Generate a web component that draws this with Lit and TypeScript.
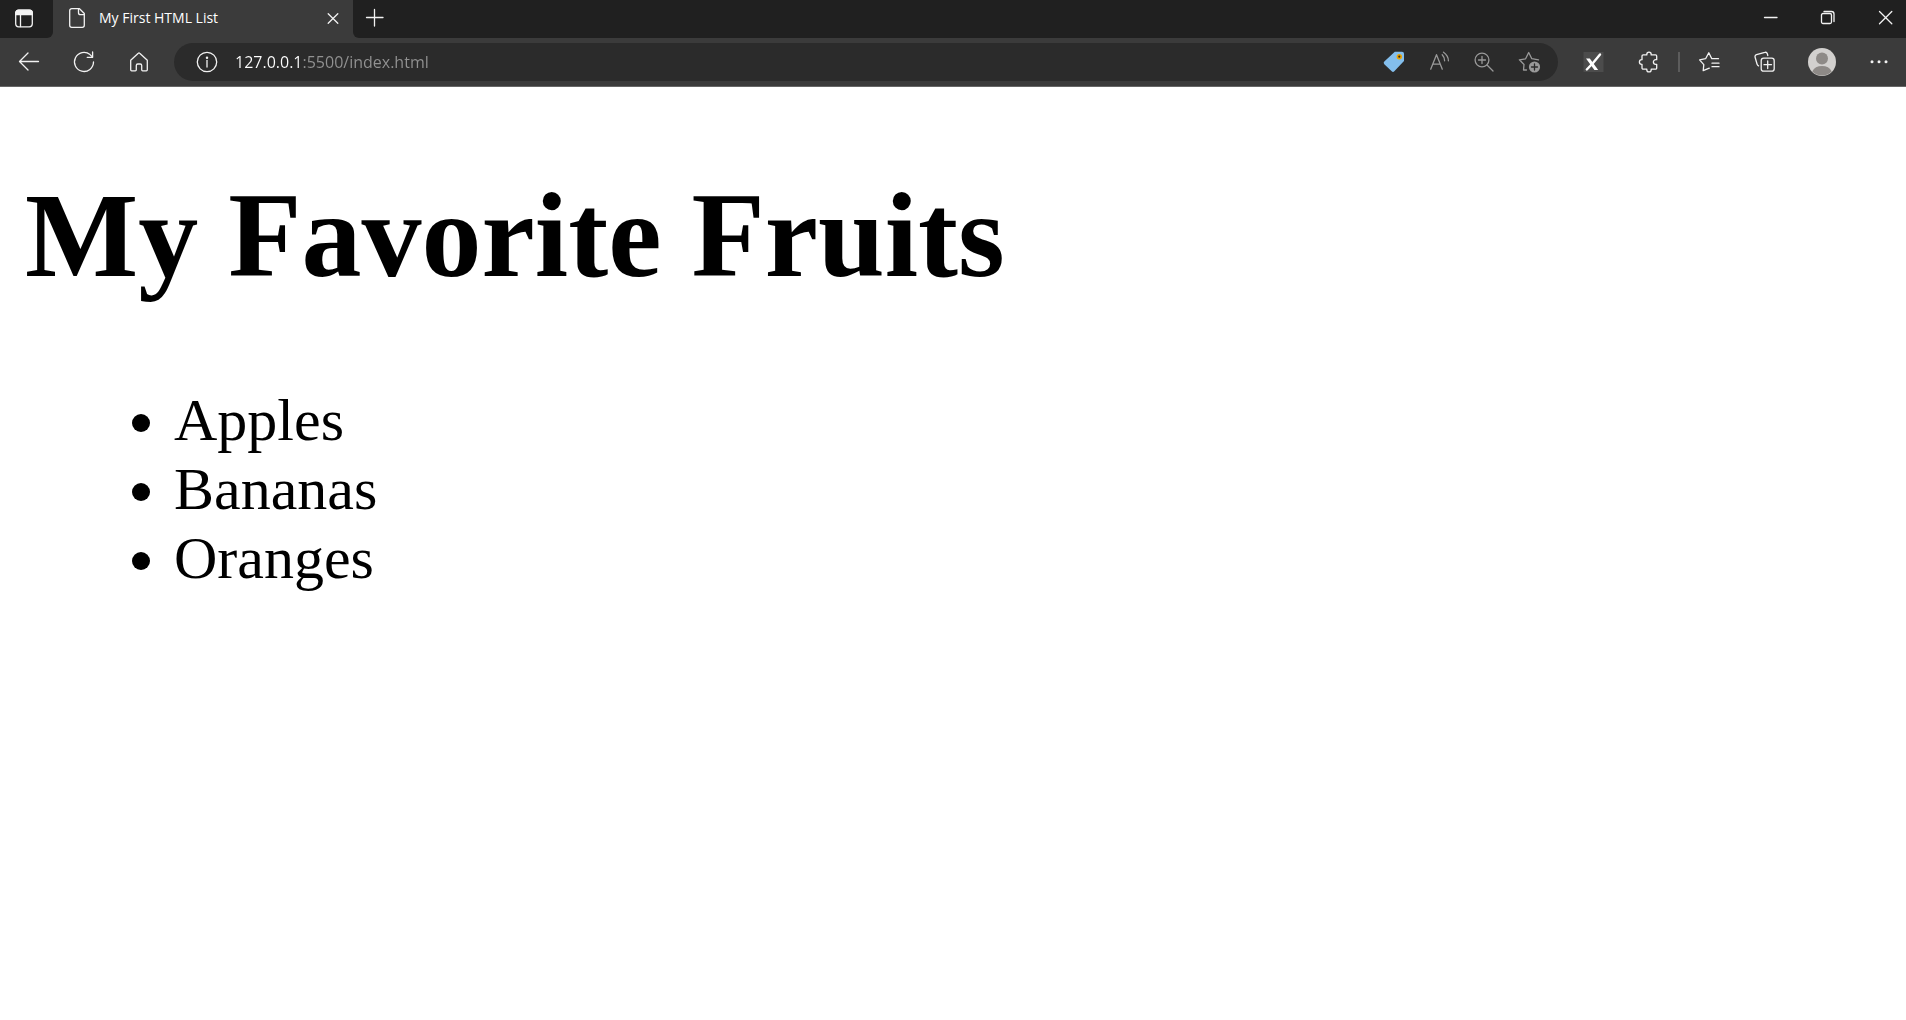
import { LitElement, html, css, svg } from "lit";
import { customElement, property } from "lit/decorators.js";

const icons: Record<string, unknown> = {
  tabs: svg`<rect x="3.7" y="3.2" width="16.6" height="16.6" rx="3"/><path d="M8.5 8v11.500"/><path d="M3.700 7.700V6.200a3 3 0 0 1 3-3h10.600a3 3 0 0 1 3 3v1.500z" fill="currentColor"/>`,
  page: svg`<path d="M14.500 2.700H6.700a2 2 0 0 0-2 2v14.600a2 2 0 0 0 2 2h10.600a2 2 0 0 0 2-2V7.500z"/><path d="M13.500 2.700v4a2 2 0 0 0 2 2h3.800"/>`,
  close: svg`<path d="M7.200 7.700l9.600 9.600M16.800 7.700l-9.600 9.600"/>`,
  plus: svg`<path d="M11.500 3.500v16.500M3.500 11.500h16.500"/>`,
  minimize: svg`<path d="M5.500 11.500h12.500"/>`,
  restore: svg`<rect x="5.500" y="7.500" width="10" height="10" rx="1.500"/><path d="M8 5.500h7.500a2.500 2.500 0 0 1 2.500 2.500v7.500"/>`,
  exit: svg`<path d="M6.500 5.500l12.300 12.300M18.800 5.500L6.500 17.800"/>`,
  back: svg`<path d="M21.500 11.500H3M11 3L2.500 11.500 11 20"/>`,
  refresh: svg`<path d="M21.500 12a9.500 9.500 0 1 1-3.500-7.400l2.500 2.400"/><path d="M20.600 2v5.300h-5.400"/>`,
  home: svg`<path d="M3.700 10.200L11.300 3.200a1 1 0 0 1 1.400 0l7.600 7v9.600a1 1 0 0 1-1 1h-3.600a1 1 0 0 1-1-1v-4.300a1.500 1.500 0 0 0-1.500-1.500h-2.400a1.500 1.500 0 0 0-1.500 1.500v4.300a1 1 0 0 1-1 1H4.700a1 1 0 0 1-1-1z"/>`,
  info: svg`<circle cx="12" cy="12" r="9.700"/><path d="M12 10.500v6.500"/><circle cx="12" cy="7.700" r=".6" fill="currentColor"/>`,
  tag: svg`<path d="M12.800 1.700h7.200a2 2 0 0 1 2 2v7.200L12.300 21.300a1.800 1.800 0 0 1-2.600 0L2.300 14.200a1.800 1.800 0 0 1 0-2.600z" fill="#83beec" stroke="none"/><circle cx="17.300" cy="6.700" r="1.900" fill="#2b2b2b" stroke="#eaa300" stroke-width="1.600"/>`,
  read: svg`<path d="M3.700 19.200L9.500 4.700l5.800 14.500M5.800 14.200h7.400"/><path d="M15.200 4.800c1.700 1.700 2.400 3.500 2.400 6M16.500 2.200c3.400 2.400 4.900 5.200 4.900 8.600"/>`,
  zoom: svg`<circle cx="10" cy="10" r="6.900"/><path d="M15 15l6 6M10 6.500v7M6.500 10h7"/>`,
  starPlus: svg`<path d="M9.500 20H6.500l.5-5.500L2.400 9.800l6.200-1L11.700 2.500l3.100 6.200 6.700 1.100"/><circle cx="17.500" cy="17" r="5.600" fill="currentColor" stroke="none"/><path d="M17.500 14v6M14.500 17h6" stroke="#2b2b2b"/>`,
  mark: svg`<rect x="1.500" y="2" width="20" height="20" fill="#4c4c4c" stroke="none"/><path d="M4 8.500h3.800l8.400 11.500h-3.800z" fill="#fff" stroke="none"/><path d="M4.800 19.500L11 13l7-8.500" stroke="#fff" stroke-width="2.400"/>`,
  puzzle: svg`<path d="M6.200 4.900h3.600v-.5a2.200 2.200 0 0 1 4.400 0v.5h4.300a1.200 1.200 0 0 1 1.200 1.200v3.600h-1a2.300 2.300 0 0 0 0 4.600h1v3.700a1.200 1.200 0 0 1-1.200 1.200h-4.300v.5a2.200 2.200 0 0 1-4.400 0v-.5H6.200A1.200 1.200 0 0 1 5 18v-3.700h-.3a2.300 2.300 0 0 1 0-4.600H5V6.100a1.200 1.200 0 0 1 1.200-1.200z"/>`,
  favorites: svg`<path d="M11.300 18.200L5.200 20.700l.6-6.100-4.200-4.700 6-1.200 3.200-6 3 6H20.500M14 13.200h7M14 16.700h7"/>`,
  collections: svg`<rect x="8.200" y="8.200" width="13" height="13" rx="2.500"/><path d="M14.700 11v7.500M11 14.700h7.500"/><path d="M14.800 5.500l-.5-1.800a2 2 0 0 0-2.500-1.300L3.500 4.700a2 2 0 0 0-1.400 2.500l2 7c.2.800.6 1.300 1.400 1.700"/>`,
  more: svg`<g fill="currentColor" stroke="none"><circle cx="5" cy="11.700" r="1.500"/><circle cx="12" cy="11.700" r="1.500"/><circle cx="19" cy="11.700" r="1.500"/></g>`,
};

@customElement("ui-icon")
export class UiIcon extends LitElement {
  @property() name = "";

  static styles = css`
    :host { display: flex; flex: none; }
    .glyph {
      display: block;
      width: 24px;
      height: 24px;
      fill: none;
      stroke: currentColor;
      stroke-width: 1.3;
      stroke-linecap: round;
      stroke-linejoin: round;
    }
  `;

  render() {
    return html`<svg class="glyph" viewBox="0 0 24 24" aria-hidden="true">${icons[this.name]}</svg>`;
  }
}

@customElement("browser-bar")
export class BrowserBar extends LitElement {
  static styles = css`
    :host {
      display: block;
      background: #3b3b3b;
      color: #f2f2f2;
      border-bottom: 1px solid #666;
      font-family: "Segoe UI", "Open Sans", sans-serif;
    }
    button {
      display: flex;
      align-items: center;
      justify-content: center;
      padding: 0;
      border: 0;
      background: none;
      color: inherit;
      font: inherit;
    }
    .strip { display: flex; height: 38px; }
    .lead {
      display: flex;
      width: 53px;
      padding-right: 5px;
      box-sizing: border-box;
      justify-content: center;
      background: #202020;
      border-bottom-right-radius: 6px;
    }
    .tab {
      display: flex;
      align-items: center;
      width: 300px;
      padding: 0 8px 2px 12px;
      box-sizing: border-box;
      gap: 10px;
    }
    .title { flex: 1; font-size: 14px; line-height: 20px; color: #fff; white-space: nowrap; }
    .rest {
      display: flex;
      flex: 1;
      background: #202020;
      border-bottom-left-radius: 6px;
    }
    .new { width: 44px; padding-bottom: 2px; }
    .windows { display: flex; margin-left: auto; }
    .window { justify-content: flex-end; width: 57px; padding: 0 9px 2px 0; }
    .toolbar { display: flex; align-items: center; height: 48px; }
    .nav { display: flex; padding: 0 8px 0 1px; }
    .tool { width: 55px; height: 38px; }
    .address {
      display: flex;
      flex: 1;
      align-items: center;
      height: 38px;
      padding: 0 7px 0 21px;
      box-sizing: border-box;
      border-radius: 19px;
      background: #2b2b2b;
    }
    .url {
      flex: 1;
      min-width: 0;
      height: 24px;
      margin: 0 0 0 16px;
      padding: 0;
      border: 0;
      outline: 0;
      font-family: inherit;
      font-size: 16px;
      line-height: 24px;
      color: transparent;
      background: linear-gradient(to right, #fff 67px, #929292 67px);
      -webkit-background-clip: text;
      background-clip: text;
    }
    .action { width: 45px; height: 38px; color: #999; }
    .extras { display: flex; align-items: center; padding-left: 8px; }
    .divider { width: 2px; height: 20px; margin: 0 2px; background: #5c5c5c; }
    .profile { width: 60px; }
    .last { width: 54px; }
    .avatar { display: block; width: 28px; height: 28px; }
  `;

  private tool(name: string, label: string, kind = "tool") {
    return html`<button class=${kind} aria-label=${label}><ui-icon name=${name}></ui-icon></button>`;
  }

  render() {
    return html`
      <div class="strip">
        <div class="lead">${this.tool("tabs", "Tab actions menu", "")}</div>
        <div class="tab">
          <ui-icon name="page"></ui-icon>
          <span class="title">My First HTML List</span>
          ${this.tool("close", "Close tab", "")}
        </div>
        <div class="rest">
          ${this.tool("plus", "New tab", "new")}
          <div class="windows">
            ${this.tool("minimize", "Minimize", "window")}
            ${this.tool("restore", "Restore", "window")}
            ${this.tool("exit", "Close", "window")}
          </div>
        </div>
      </div>
      <div class="toolbar">
        <nav class="nav">
          ${this.tool("back", "Back")} ${this.tool("refresh", "Refresh")} ${this.tool("home", "Home")}
        </nav>
        <div class="address">
          ${this.tool("info", "View site information", "")}
          <input class="url" type="text" aria-label="Address" .value=${"127.0.0.1:5500/index.html"} />
          ${this.tool("tag", "Shopping", "action")}
          ${this.tool("read", "Read aloud", "action")}
          ${this.tool("zoom", "Zoom", "action")}
          ${this.tool("starPlus", "Add to favorites", "action")}
        </div>
        <div class="extras">
          ${this.tool("mark", "Extension")}
          ${this.tool("puzzle", "Extensions")}
          <span class="divider"></span>
          ${this.tool("favorites", "Favorites")}
          ${this.tool("collections", "Collections")}
          <button class="tool profile" aria-label="Profile">
            <svg class="avatar" viewBox="0 0 28 28" aria-hidden="true">
              <circle cx="14" cy="14" r="14" fill="#d2d0ce" />
              <circle cx="14" cy="10.500" r="6" fill="#8e8a87" />
              <path d="M4.300 23.500C6 19.800 9.500 18 14 18s8 1.800 9.700 5.500A13.500 13.500 0 0 1 14 27.500a13.500 13.500 0 0 1-9.700-4z" fill="#8e8a87" />
            </svg>
          </button>
          ${this.tool("more", "Settings and more", "tool last")}
        </div>
      </div>
    `;
  }
}

@customElement("app-root")
export class AppRoot extends LitElement {
  static styles = css`
    :host {
      display: block;
      min-height: 100vh;
      background: #fff;
      color: #000;
    }
    .document {
      padding: 80px 25px;
      font-family: "Times New Roman", "Liberation Serif", serif;
      font-size: 60px;
      line-height: 69px;
    }
    .heading { margin: 0 0 81px; font-size: 120px; line-height: 138px; font-weight: 700; }
    .fruits { margin: 0; padding-left: 149px; list-style: disc; }
  `;

  render() {
    return html`
      <browser-bar></browser-bar>
      <main class="document">
        <h1 class="heading">My Favorite Fruits</h1>
        <ul class="fruits">
          ${["Apples", "Bananas", "Oranges"].map((fruit) => html`<li>${fruit}</li>`)}
        </ul>
      </main>
    `;
  }
}
